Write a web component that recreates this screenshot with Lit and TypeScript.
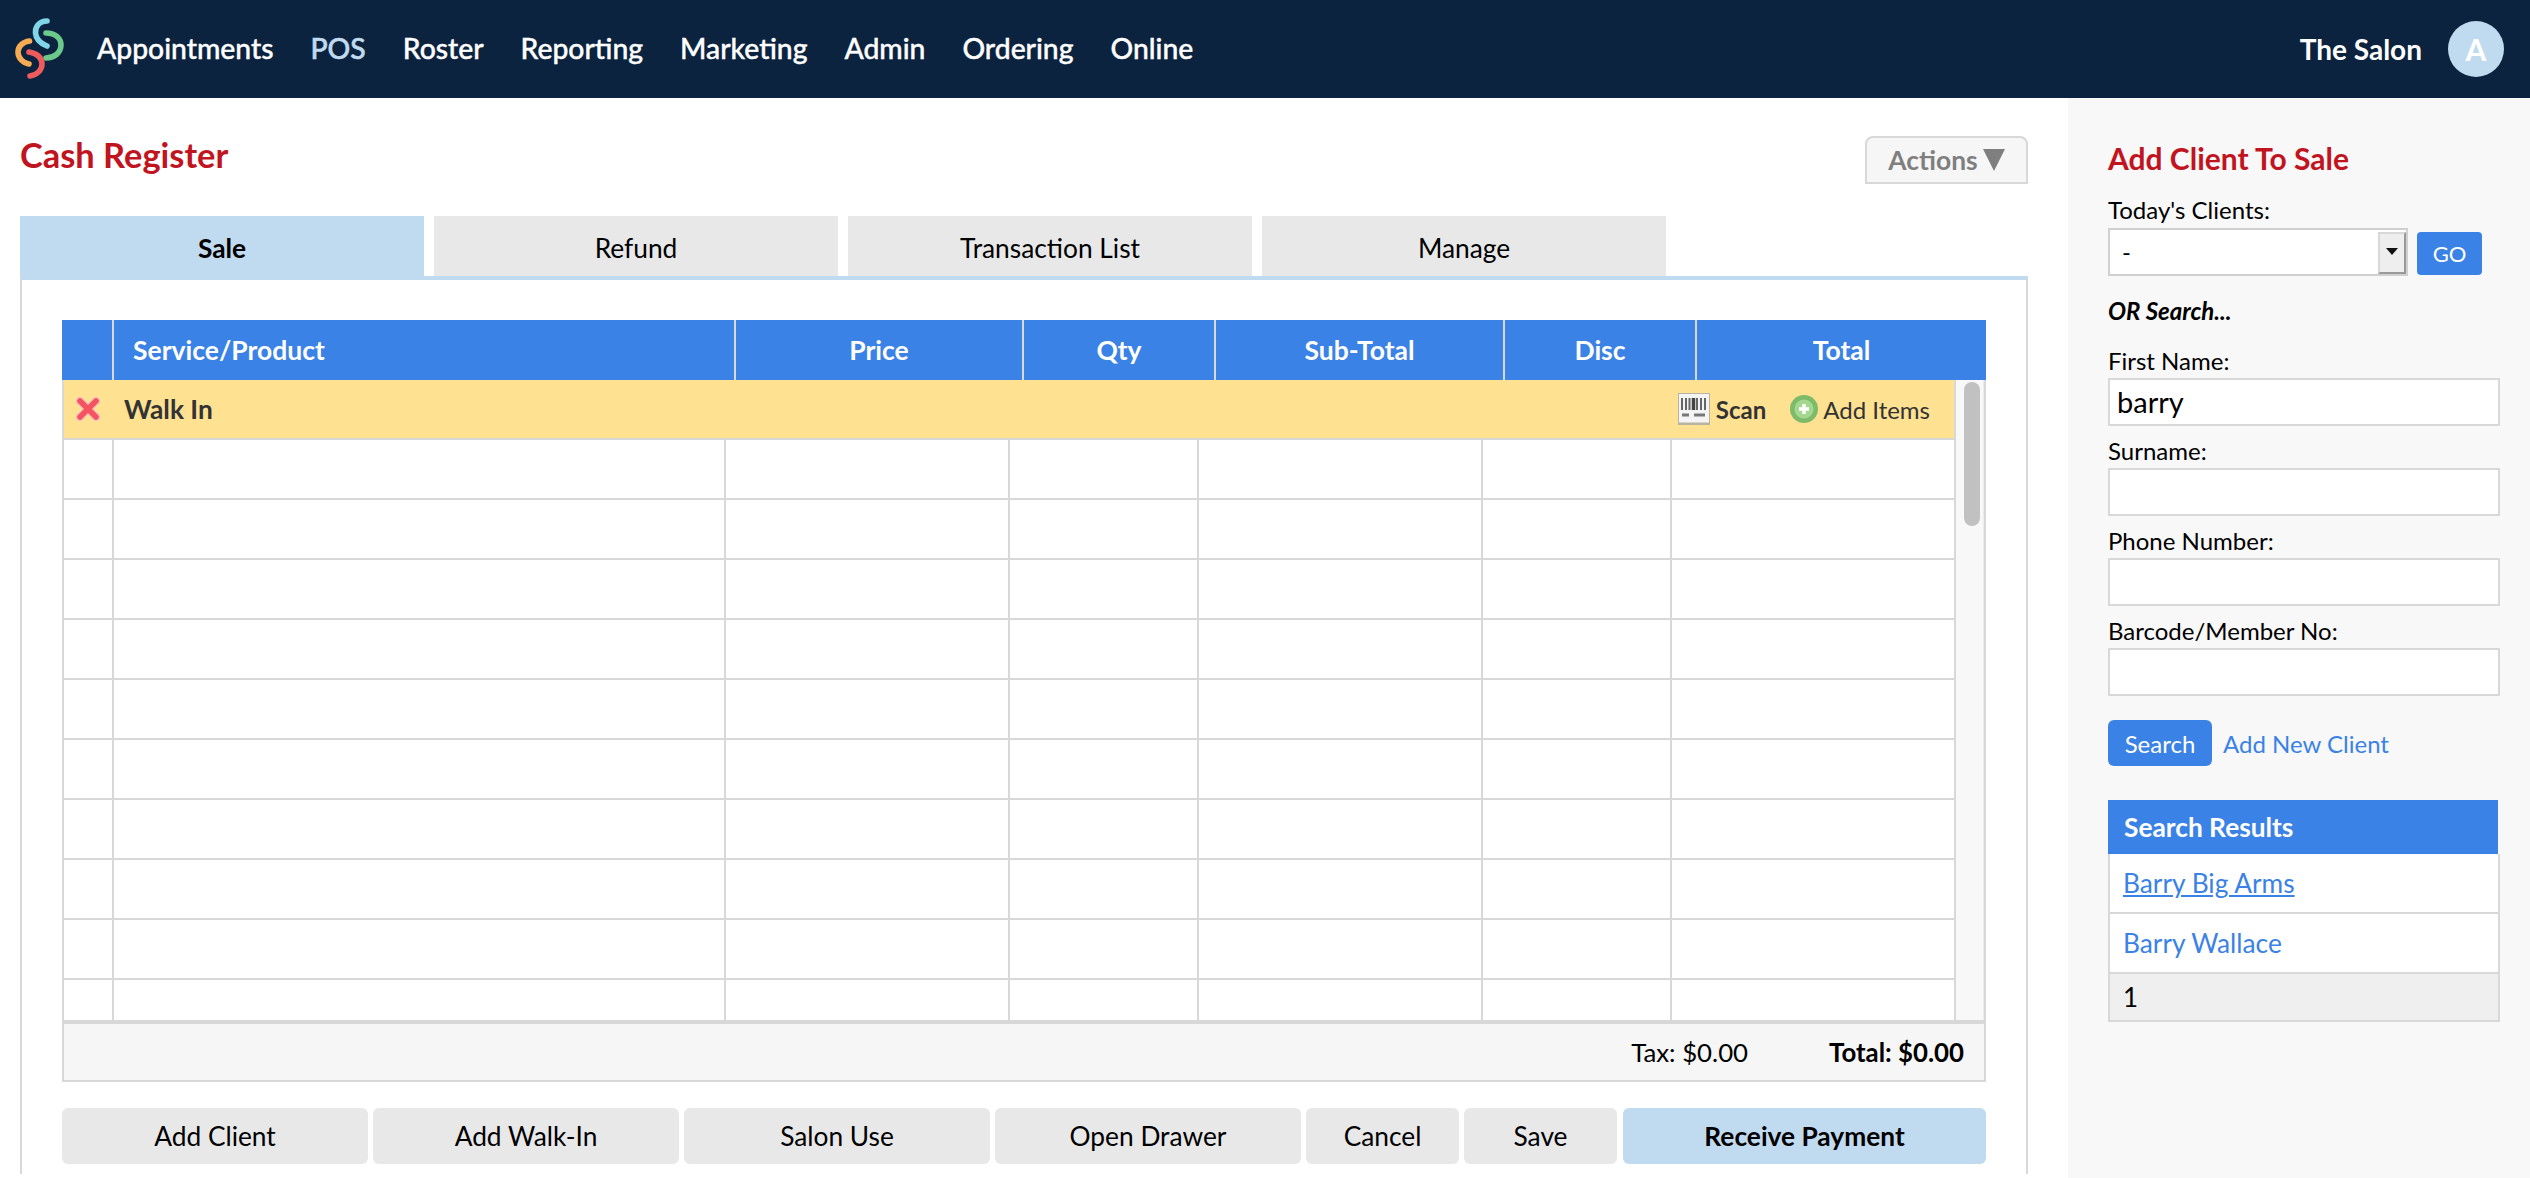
import {css, html, LitElement} from 'lit';
import {customElement} from 'lit/decorators.js';

const navItems = ['Appointments', 'POS', 'Roster', 'Reporting', 'Marketing', 'Admin', 'Ordering', 'Online'];
const tabs = ['Sale', 'Refund', 'Transaction List', 'Manage'];
const columns = ['', 'Service/Product', 'Price', 'Qty', 'Sub-Total', 'Disc', 'Total'];
const searchFields = [
	{label: 'First Name:', value: 'barry'},
	{label: 'Surname:', value: ''},
	{label: 'Phone Number:', value: ''},
	{label: 'Barcode/Member No:', value: ''},
];
const actions = ['Add Client', 'Add Walk-In', 'Salon Use', 'Open Drawer', 'Cancel', 'Save'];

const logo = html`
	<svg class="logo" viewBox="0 0 90 90" fill="none" stroke-width="5.6" stroke-linecap="round">
		<path d="M47 21 C39 21 35 27 35.500 33 C36 40 42 44 47 46" stroke="#80d6e6"/>
		<path d="M46 33 C55 33 61 38 61 45 C61 53 54 58 46 58" stroke="#6bc98a"/>
		<path d="M29.500 41 C22 42 18 47 18 52 C18 58 23 63 29 64" stroke="#f5ab54"/>
		<path d="M29 52 C37 53 42 58 42 64 C42 70 37 75 30 76" stroke="#ee5b5c"/>
	</svg>
`;

const removeIcon = html`
	<svg class="remove" viewBox="0 0 28 28">
		<path d="M6 6 L22 22 M22 6 L6 22" stroke="#ffb9c0" stroke-width="8" stroke-linecap="round"/>
		<path d="M6 6 L22 22 M22 6 L6 22" stroke="#f4545f" stroke-width="5.500" stroke-linecap="round"/>
	</svg>
`;

const barcodeIcon = html`
	<svg class="barcode" viewBox="0 0 32 32">
		<rect width="32" height="32" fill="#b8b3a2"/>
		<rect x="1" y="1" width="30" height="28.500" fill="#f4f4f4"/>
		<path d="M4 5 V17 M8 5 V17 M11.500 5 V17 M16 5 V17 M19 5 V17 M23 5 V17 M27 5 V17" stroke="#666" stroke-width="2"/>
		<path d="M15.500 5 V17" stroke="#444" stroke-width="3.500"/>
		<path d="M4 22 H11 M16 22 H27" stroke="#777" stroke-width="3"/>
	</svg>
`;

const addIcon = html`
	<svg class="add" viewBox="0 0 28 28">
		<circle cx="14" cy="14" r="14" fill="#7dbb6a"/>
		<circle cx="14" cy="14" r="9.500" fill="#a5d88f"/>
		<path d="M14 9 V19 M9 14 H19" stroke="#fff" stroke-width="3.500"/>
	</svg>
`;

@customElement('app-root')
export class AppRoot extends LitElement {
	protected render() {
		return html`
		<header>
			${logo}
			<nav>
				${navItems.map(item => html`<a class=${item === 'POS' ? 'current' : ''}>${item}</a>`)}
			</nav>
			<span class="salon">The Salon</span>
			<span class="avatar">A</span>
		</header>
		<div class="page">
			<main>
				<div class="title-row">
					<h1>Cash Register</h1>
					<button class="actions">Actions<svg viewBox="0 0 22 22"><path d="M0 0 H22 L11 22 Z" fill="#7f7f7f"/></svg></button>
				</div>
				<div class="tabs">
					${tabs.map((tab, i) => html`<div class="tab ${i === 0 ? 'active' : ''}">${tab}</div>`)}
				</div>
				<section class="panel">
					<div class="head">
						${columns.map(col => html`<div>${col}</div>`)}
					</div>
					<div class="scroller">
						<div class="rows">
							<div class="row walk-in">
								<div class="cell-x">${removeIcon}</div>
								<div class="walk-name">
									<b>Walk In</b>
									<span class="scan">${barcodeIcon}<b>Scan</b></span>
									<span class="add-items">${addIcon}Add Items</span>
								</div>
							</div>
							${Array.from({length: 10}, () => html`
								<div class="row">
									${[0, 1, 2, 3, 4, 5, 6].map(() => html`<div></div>`)}
								</div>
							`)}
						</div>
						<div class="track"><div class="thumb"></div></div>
					</div>
					<div class="summary">
						<span>Tax: $0.00</span>
						<b>Total: $0.00</b>
					</div>
					<div class="buttons">
						${actions.map(a => html`<button>${a}</button>`)}
						<button class="pay">Receive Payment</button>
					</div>
				</section>
			</main>
			<aside>
				<h2>Add Client To Sale</h2>
				<div class="label first">Today's Clients:</div>
				<div class="select-row">
					<div class="select">
						<span>-</span>
						<div class="arrow"></div>
					</div>
					<button class="blue go">GO</button>
				</div>
				<div class="or">OR Search...</div>
				${searchFields.map(f => html`
					<label>${f.label}</label>
					<input type="text" .value=${f.value}>
				`)}
				<div class="search-row">
					<button class="blue search">Search</button>
					<a>Add New Client</a>
				</div>
				<div class="results">
					<div class="results-head">Search Results</div>
					<div class="result"><a class="hover">Barry Big Arms</a></div>
					<div class="result"><a>Barry Wallace</a></div>
					<div class="pager">1</div>
				</div>
			</aside>
		</div>
		`;
	}

	static styles = css`
		:host {
			display: block;
			height: 1178px;
			overflow: hidden;
			font-family: Lato, sans-serif;
			font-size: 24px;
			color: #000;
		}

		header {
			display: flex;
			align-items: center;
			height: 98px;
			background: #0c2340;
			color: #fff;
		}
		.logo {
			width: 90px;
			height: 90px;
			align-self: flex-start;
			flex: none;
		}
		nav {
			display: flex;
			gap: 37px;
			margin-left: 7px;
			padding-bottom: 2px;
			flex: 1;
			font-size: 28.300px;
			font-weight: 500;
			-webkit-text-stroke: 0.4px #fff;
		}
		nav a.current {
			color: #c0dbef;
			-webkit-text-stroke: 0.6px #c0dbef;
		}
		.salon {
			font-size: 28px;
			font-weight: 700;
			margin-right: 26px;
		}
		.avatar {
			display: flex;
			align-items: center;
			justify-content: center;
			width: 56px;
			height: 56px;
			margin-right: 26px;
			border-radius: 50%;
			background: #c0dbef;
			font-size: 30px;
			font-weight: 700;
		}

		.page {
			display: flex;
			height: 1080px;
		}
		main {
			width: 2068px;
			box-sizing: border-box;
			padding: 0 40px 0 20px;
			flex: none;
		}
		.title-row {
			display: flex;
			justify-content: space-between;
			align-items: flex-start;
			height: 118px;
			padding-top: 38px;
			box-sizing: border-box;
		}
		h1 {
			margin: 0;
			color: #c1141f;
			font-size: 34.400px;
			line-height: 38px;
			font-weight: 700;
		}
		.actions {
			display: flex;
			align-items: center;
			justify-content: center;
			gap: 5px;
			width: 163px;
			height: 48px;
			padding: 0;
			border: 2px solid #d8d8d8;
			border-radius: 8px 8px 0 0;
			background: #f6f6f6;
			color: #7f7f7f;
			font: 700 26.400px Lato, sans-serif;
		}
		.actions svg {
			width: 22px;
			height: 22px;
		}

		.tabs {
			display: flex;
			gap: 10px;
		}
		.tab {
			width: 404px;
			height: 60px;
			line-height: 64px;
			text-align: center;
			background: #e8e8e8;
			font-size: 26.300px;
		}
		.tab.active {
			background: #c0dbef;
			font-weight: 700;
		}

		.panel {
			box-sizing: border-box;
			height: 898px;
			padding: 40px;
			border: 2px solid #d8d8d8;
			border-top: 4px solid #c0dbef;
			border-bottom: none;
		}
		.head {
			display: grid;
			grid-template-columns: 50px 622px 288px 192px 289px 192px 1fr;
			height: 60px;
			background: #3a82e6;
			color: #fff;
			font-size: 26.500px;
			font-weight: 700;
		}
		.head div {
			line-height: 61px;
			text-align: center;
			border-left: 2px solid #d8d8d8;
		}
		.head div:first-child {
			border-left: none;
		}
		.head div:nth-child(2) {
			text-align: left;
			padding-left: 19px;
		}
		.scroller {
			display: flex;
			height: 640px;
			overflow: hidden;
			border-left: 2px solid #d8d8d8;
			border-right: 2px solid #d8d8d8;
			border-bottom: 4px solid #d8d8d8;
		}
		.rows {
			flex: 1;
			border-right: 2px solid #d8d8d8;
		}
		.row {
			display: grid;
			grid-template-columns: 48px 612px 284px 189px 284px 189px 1fr;
			height: 58px;
			border-bottom: 2px solid #d8d8d8;
		}
		.row > div + div {
			border-left: 2px solid #d8d8d8;
		}
		.walk-in {
			grid-template-columns: 48px 1fr;
			background: #fee292;
			color: #333;
		}
		.row.walk-in > div + div {
			border-left-color: #fee292;
		}
		.cell-x {
			display: flex;
			align-items: center;
			justify-content: center;
		}
		.remove {
			width: 28px;
			height: 28px;
		}
		.walk-name {
			display: flex;
			align-items: center;
			padding-left: 10px;
		}
		.walk-name > b {
			flex: 1;
			font-size: 26.300px;
		}
		.scan {
			display: flex;
			align-items: center;
			gap: 6px;
			margin-right: 24px;
		}
		.barcode {
			width: 32px;
			height: 32px;
		}
		.add-items {
			display: flex;
			align-items: center;
			gap: 5px;
			margin-right: 24px;
		}
		.add {
			width: 28px;
			height: 28px;
		}
		.track {
			width: 28px;
			flex: none;
			padding: 2px 3px 2px 8px;
			box-sizing: border-box;
			background: #f8f8f8;
			border-right: 1px solid #ececec;
		}
		.thumb {
			height: 144px;
			border-radius: 8px;
			background: #c1c1c1;
		}
		.summary {
			display: flex;
			justify-content: flex-end;
			align-items: center;
			gap: 81px;
			height: 56px;
			padding-right: 20px;
			background: #f6f6f6;
			border: 2px solid #d8d8d8;
			border-top: none;
			font-size: 25.800px;
		}
		.buttons {
			display: grid;
			grid-template-columns: 306px 306px 306px 306px 153px 153px 1fr;
			gap: 5px;
			margin-top: 26px;
		}
		.buttons button {
			height: 56px;
			padding: 0;
			border: none;
			border-radius: 6px;
			background: #e8e8e8;
			color: #000;
			font: 400 26.300px Lato, sans-serif;
		}
		.buttons .pay {
			margin-left: 1px;
			background: #c0dbef;
			font-weight: 700;
		}

		aside {
			flex: 1;
			box-sizing: border-box;
			padding: 0 30px 0 40px;
			background: #f8f8f8;
		}
		h2 {
			margin: 42px 0 0;
			color: #c1141f;
			font-size: 30px;
			line-height: 36px;
			font-weight: 700;
		}
		label {
			display: block;
			box-sizing: border-box;
			height: 42px;
			padding-top: 8px;
			line-height: 34px;
		}
		.label.first {
			height: 34px;
			line-height: 32px;
			margin-top: 18px;
		}
		.select-row {
			display: flex;
			align-items: flex-end;
			gap: 9px;
		}
		.select {
			display: flex;
			align-items: stretch;
			width: 300px;
			height: 48px;
			box-sizing: border-box;
			border: 2px solid #d0d0d0;
			background: #fff;
		}
		.select span {
			flex: 1;
			line-height: 44px;
			padding-left: 12px;
		}
		.arrow {
			position: relative;
			width: 28px;
			box-sizing: border-box;
			background: #eee;
			border: 2px solid;
			border-color: #d8d8d8 #999 #999 #d8d8d8;
			margin-top: 2px;
		}
		.arrow::after {
			content: '';
			position: absolute;
			left: 6px;
			top: 14px;
			border: 6px solid transparent;
			border-top: 7px solid #111;
			border-bottom: none;
		}
		.blue {
			padding: 0;
			border: none;
			background: #3a82e6;
			color: #fff;
			font-family: Lato, sans-serif;
		}
		.go {
			width: 65px;
			height: 43px;
			margin-bottom: 1px;
			border-radius: 4px;
			font-size: 22px;
		}
		.or {
			height: 30px;
			line-height: 30px;
			margin-top: 20px;
			margin-bottom: 10px;
			font-style: italic;
			font-weight: 700;
		}
		input {
			display: block;
			width: 392px;
			height: 48px;
			box-sizing: border-box;
			margin: 0;
			padding: 0 7px 2px;
			border: 2px solid #d8d8d8;
			background: #fff;
			color: #000;
			font: 400 29px Lato, sans-serif;
			outline: none;
		}
		.search-row {
			display: flex;
			align-items: center;
			gap: 11px;
			margin-top: 24px;
			color: #3a82e6;
		}
		.search {
			width: 104px;
			height: 46px;
			border-radius: 6px;
			font-size: 24px;
		}
		.results {
			width: 392px;
			margin-top: 34px;
		}
		.results-head {
			width: 390px;
			height: 54px;
			line-height: 54px;
			padding-left: 16px;
			box-sizing: border-box;
			background: #3a82e6;
			color: #fff;
			font-size: 26.300px;
			font-weight: 700;
		}
		.result {
			height: 58px;
			line-height: 58px;
			padding-left: 13px;
			background: #fff;
			color: #3a82e6;
			font-size: 26.300px;
			border: 2px solid #d8d8d8;
			border-width: 0 2px 2px;
		}
		.hover {
			text-decoration: underline;
		}
		.pager {
			height: 46px;
			line-height: 46px;
			padding-left: 13px;
			background: #efefef;
			font-size: 26px;
			border: 2px solid #d8d8d8;
			border-width: 0 2px 2px;
		}
	`;
}
